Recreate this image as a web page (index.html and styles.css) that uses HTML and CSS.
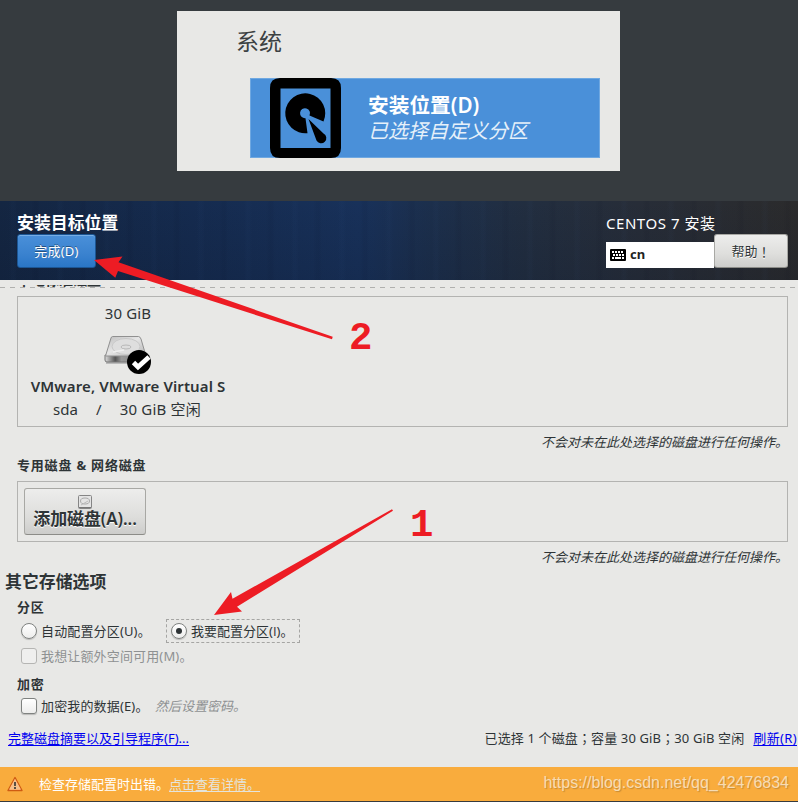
FILE: index.html
```html
<!DOCTYPE html>
<html lang="zh-CN">
<head>
<meta charset="utf-8">
<title>安装目标位置</title>
<link rel="stylesheet" href="styles.css">
</head>
<body>
<section class="hero">
  <div class="card">
    <h2 class="card-title">系统</h2>
    <div class="spoke">
      <svg class="spoke-icon" width="71" height="80" viewBox="0 0 71 80">
        <path fill-rule="evenodd" d="M10 0H61Q71 0 71 10V70Q71 80 61 80H10Q0 80 0 70V10Q0 0 10 0ZM10.500 10.500V70H60.500V10.500Z"/>
        <path d="M37.500 55.200A20 20 0 1 1 53.500 43.500L39.500 37.500A5 5 0 1 0 35.500 40.200Z"/>
        <path d="M38.500 41L53.500 55.500A5.200 5.200 0 1 1 46.500 62.500Z"/>
      </svg>
      <div class="spoke-text">
        <div class="spoke-name">安装位置(D)</div>
        <div class="spoke-status">已选择自定义分区</div>
      </div>
    </div>
  </div>
</section>

<header class="topbar">
  <div class="top-left">
    <h1 class="page-title">安装目标位置</h1>
    <button class="btn done">完成(D)</button>
  </div>
  <div class="top-right">
    <div class="product">CENTOS 7 安装</div>
    <div class="top-controls">
      <div class="layout-box">
        <svg width="16" height="12" viewBox="0 0 16 12">
          <rect width="16" height="12" rx="1"/>
          <path stroke="#fff" stroke-width="2" stroke-dasharray="2 1" d="M2 3H14M3 6H15"/>
          <path stroke="#fff" stroke-width="2" d="M2 9H4M5 9H11M12 9H14"/>
        </svg>
        <span>cn</span>
      </div>
      <button class="btn help">帮助<span class="wide" lang="zh-TW">！</span></button>
    </div>
  </div>
</header>

<main class="content">
  <div class="scrolled"><span>本地标准磁盘</span></div>
  <div class="scroll-edge"></div>

  <div class="frame local">
    <div class="disk">
      <div class="disk-size">30 GiB</div>
      <svg class="disk-icon" width="48" height="40" viewBox="0 0 48 40">
        <defs>
          <linearGradient id="top" x1="0" y1="0" x2="1" y2="1"><stop offset="0" stop-color="#bdbdbd"/><stop offset=".45" stop-color="#e6e6e6"/><stop offset="1" stop-color="#b4b4b4"/></linearGradient>
          <linearGradient id="side" x1="0" x2="1"><stop offset="0" stop-color="#ddd"/><stop offset=".25" stop-color="#555"/><stop offset=".4" stop-color="#999"/><stop offset="1" stop-color="#777"/></linearGradient>
        </defs>
        <path d="M2 29H42" stroke="#bbb" stroke-width="2"/>
        <path d="M1 21L42 21V26Q42 28 40 28H3Q1 28 1 26Z" fill="url(#side)" stroke="#777"/>
        <path d="M8.500 2.500H34.500Q36 2.500 37 5L42 22H1.500L7 4Q7.500 2.500 8.500 2.500Z" fill="url(#top)" stroke="#909090"/>
        <ellipse cx="22" cy="12.500" rx="14" ry="8" fill="#dedede" stroke="#c8c8c8"/>
        <ellipse cx="22" cy="13" rx="5" ry="2" fill="#ddd" stroke="#b8b8b8"/>
        <path d="M9 18L20 16" stroke="#efefef" stroke-width="1.500"/>
        <circle cx="35" cy="28" r="12"/>
        <path d="M29.500 28.500L34 33L45 23" fill="none" stroke="#fff" stroke-width="4.800"/>
      </svg>
      <div class="disk-name">VMware, VMware Virtual S</div>
      <div class="disk-meta"><span>sda</span><span>/</span><span>30 GiB 空闲</span></div>
    </div>
  </div>
  <p class="note">不会对未在此处选择的磁盘进行任何操作。</p>

  <h3 class="sub special">专用磁盘 &amp; 网络磁盘</h3>
  <div class="frame network">
    <button class="btn add">
      <svg width="14" height="14" viewBox="0 0 14 14">
        <rect x=".5" y=".5" width="13" height="13" rx="1" fill="#e4e4e4" stroke="#858585"/>
        <path d="M1 12.500H13" stroke="#777"/>
        <ellipse cx="7" cy="6" rx="4.500" ry="3" fill="none" stroke="#aaa"/>
        <path d="M3 10L10 6" stroke="#bbb"/>
      </svg>
      <span>添加磁盘(A)...</span>
    </button>
  </div>
  <p class="note">不会对未在此处选择的磁盘进行任何操作。</p>

  <h2 class="options-title">其它存储选项</h2>
  <h3 class="sub partition">分区</h3>
  <div class="row radios">
    <label class="choice auto"><i class="radio"></i><span>自动配置分区(U)。</span></label>
    <label class="choice focused"><i class="radio on"></i><span>我要配置分区(<span class="narrow">I</span>)。</span></label>
  </div>
  <div class="row extra">
    <label class="choice disabled"><i class="check"></i><span>我想让额外空间可用(M)。</span></label>
  </div>
  <h3 class="sub encrypt">加密</h3>
  <div class="row data">
    <label class="choice secret"><i class="check"></i><span>加密我的数据(E)。</span></label>
    <em class="hint">然后设置密码。</em>
  </div>
  <div class="summary">
    <a class="link full">完整磁盘摘要以及引导程序(F)...</a>
    <span class="totals">已选择 1 个磁盘<span class="wide" lang="zh-TW">；</span>容量 30 GiB<span class="wide" lang="zh-TW">；</span>30 GiB 空闲</span>
    <a class="link refresh">刷新(R)</a>
  </div>
</main>

<footer class="warning">
  <svg width="16" height="16" viewBox="0 0 16 16">
    <path d="M8 1.500L15 14.500H1Z" fill="#f59a50" stroke="#cf5c12" stroke-width="1.400" stroke-linejoin="round"/>
    <path d="M8 3.500L13.300 13.300H2.700Z" fill="#f3c08c" stroke="#ffc08a" stroke-width=".8"/>
    <path d="M8 6V10M8 11V13" stroke="#333" stroke-width="1.600"/>
  </svg>
  <span class="warning-text">检查存储配置时出错。</span><a class="details">点击查看详情。</a>
  <span class="watermark">https://blog.csdn.net/qq_42476834</span>
</footer>

<svg class="annotations" width="798" height="802" viewBox="0 0 798 802">
  <path d="M94 260L122.500 256.500L118.500 262.300L332.700 336.800L332 339.300L118 271L115.300 277.700Z"/>
  <path d="M214 615L231 592L232.500 598.700L392 509.300L393 510.700L237 606.700L242 611.500Z"/>
</svg>
<span class="mark two">2</span>
<span class="mark one">1</span>
</body>
</html>
```
FILE: styles.css
```css
* { box-sizing: border-box; }
body {
  margin: 0; width: 798px; height: 802px; overflow: hidden; position: relative;
  background: #363b3f; color: #2e3436;
  font: 13px/20px "Noto Sans", "Noto Sans CJK SC", sans-serif;
}
h1, h2, h3, p { margin: 0; }
svg { display: block; flex: none; }
span, a, button, em, div { white-space: nowrap; }
.wide { font-family: "Noto Sans CJK TC", sans-serif; line-height: 1; }
.narrow { font-family: "Open Sans", sans-serif; }

.hero { height: 201px; padding: 11px 0 0 177px; }
.card { width: 443px; height: 160px; background: #e8e8e6; padding-top: 15px; }
.card-title { font-size: 23px; font-weight: 400; line-height: 30px; height: 52px; margin-left: 59px; color: #3c4143; }
.spoke { display: flex; width: 350px; height: 80px; margin-left: 73px; padding-left: 20px; background: #4a90d9; box-shadow: inset 0 0 0 1px #6fa8e1; }
.spoke-text { margin-left: 27px; padding-top: 14px; color: #fff; }
.spoke-name { font-size: 20.700px; font-weight: 600; line-height: 26px; }
.spoke-status { font-size: 20px; font-style: italic; line-height: 26px; color: #e6f0fa; }

.topbar {
  display: flex; justify-content: space-between; height: 79px; padding: 12px 10px 0 17px; color: #fff;
  background:
    repeating-linear-gradient(90deg, transparent 0 9px, rgba(80,130,200,.025) 12px 14px, transparent 17px 31px, rgba(0,0,20,.05) 35px 37px, transparent 40px 47px),
    linear-gradient(180deg, transparent, rgba(10,20,40,.18)),
    linear-gradient(90deg, #142642 0, #152b4f 24%, #18315a 45%, #1c2f4c 54%, #222e40 66%, #272d38 80%, #2b2b2c 100%);
}
.page-title { font-size: 16.900px; font-weight: 700; line-height: 20px; height: 21px; }
.btn {
  display: flex; align-items: center; justify-content: center; padding: 0; border-radius: 3px;
  font: inherit; color: #2e3436; border: 1px solid #a8a8a4; border-bottom-color: #8c8c88;
  background: linear-gradient(#ededec, #dededc 60%, #cdcdcb); text-shadow: 0 1px #fff;
}
.done { width: 79px; height: 34px; color: #fff; letter-spacing: .2px; border-color: #1c5694; background: linear-gradient(#4a90d9, #3a82cf 60%, #2a76c6); text-shadow: 0 -1px rgba(0,0,0,.4); box-shadow: inset 0 1px #77aee5; }
.top-right { width: 182px; }
.product { font-size: 15px; letter-spacing: .55px; line-height: 21px; height: 21px; }
.top-controls { display: flex; align-items: flex-end; }
.layout-box { display: flex; align-items: center; gap: 4px; width: 108px; height: 26px; padding-left: 4px; background: #fff; color: #222; font-weight: 700; }
.layout-box span { margin-top: -2px; }
.help { width: 74px; height: 34px; }

.content { height: 487px; background: #e8e8e6; padding-top: 5px; }
.scrolled { height: 2px; overflow: hidden; padding-left: 17px; }
.scrolled span { display: block; margin-top: -15px; font-size: 14px; font-weight: 700; }
.scroll-edge { height: 1px; background: repeating-linear-gradient(90deg, #b0b0ae 0 5px, transparent 5px 10px); }
.frame { width: 771px; margin-left: 17px; border: 1px solid #b3b3b1; }
.local { height: 131px; margin-top: 8px; padding: 6px 0 0 12px; }
.disk { width: 196px; display: flex; flex-direction: column; align-items: center; }
.disk-size { font-size: 15px; line-height: 20px; height: 21px; letter-spacing: .15px; }
.disk-icon { margin: 10px 0 0 -1px; }
.disk-name { font-size: 15px; font-weight: 600; line-height: 20px; height: 22px; margin-top: 2px; letter-spacing: .1px; }
.disk-meta { display: flex; gap: 18px; font-size: 15px; line-height: 22px; letter-spacing: .05px; margin-left: -2px; }
.disk-meta span:last-child { letter-spacing: .2px; }
.note { height: 30px; line-height: 30px; text-align: right; font-style: italic; padding-right: 10px; }
.sub { font-size: 13px; font-weight: 700; line-height: 19px; height: 20px; margin-left: 17px; letter-spacing: .8px; }
.special { margin: -1px 0 5px 17px; }
.network { height: 61px; padding: 6px; }
.add { flex-direction: column; width: 122px; height: 47px; font-size: 17px; font-weight: 600; line-height: 20px; padding-top: 1px; }
.add span { letter-spacing: -.1px; }
.options-title { font-size: 16.900px; font-weight: 700; line-height: 24px; height: 24px; margin: -2px 0 0 5px; }
.partition { margin-top: 4px; }
.row { display: flex; align-items: center; margin-left: 17px; }
.radios { height: 24px; margin-top: 1px; }
.choice { display: flex; align-items: center; gap: 4px; height: 24px; padding-left: 4px; }
.auto { width: 134px; }
.auto span, .disabled span, .secret span { letter-spacing: .15px; }
.focused { width: 134px; outline: 1px dashed #a5a5a3; outline-offset: -1px; margin-left: 15px; padding-left: 5px; }
.radio, .check { flex: none; width: 16px; height: 16px; border: 1px solid #7f8280; background: linear-gradient(#fff, #ededec); box-shadow: 0 1px 1px rgba(0,0,0,.2); }
.radio { border-radius: 50%; }
.check { border-radius: 3px; }
.on { display: flex; align-items: center; justify-content: center; }
.on::after { content: ""; width: 6px; height: 6px; border-radius: 50%; background: #2e3436; }
.extra { height: 26px; }
.disabled { color: #8e9192; }
.disabled .check { border-color: #b5b5b3; background: #efefee; box-shadow: none; }
.encrypt { margin-top: 6px; }
.data { height: 22px; }
.secret { width: 130px; }
.hint { margin-left: 8px; color: #8e9192; }
.summary { display: flex; align-items: center; height: 24px; margin-top: 9px; padding: 0 1px 0 8px; }
.link { color: #0000f0; text-decoration: underline; text-underline-offset: 2px; }
.refresh { letter-spacing: .35px; }
.totals { margin-left: auto; margin-right: 9px; letter-spacing: .13px; }

.warning { display: flex; align-items: center; height: 34px; padding: 0 9px 0 7px; background: #f9ac3d; color: #fff; }
.warning-text { margin-left: 16px; }
.details { color: #e4e4dc; text-decoration: underline; text-underline-offset: 2px; }
.watermark { margin: -3px 0 0 auto; font: 16px/20px "Liberation Sans", sans-serif; color: #f7dcb4; text-shadow: 1px 1px 1px rgba(120,90,40,.4); }

.annotations { position: absolute; left: 0; top: 0; fill: #ed1c24; pointer-events: none; }
.mark { position: absolute; font: 700 39px/40px "Liberation Mono", monospace; color: #ed1c24; }
.two { left: 349px; top: 319px; }
.one { left: 410px; top: 506px; }
```
